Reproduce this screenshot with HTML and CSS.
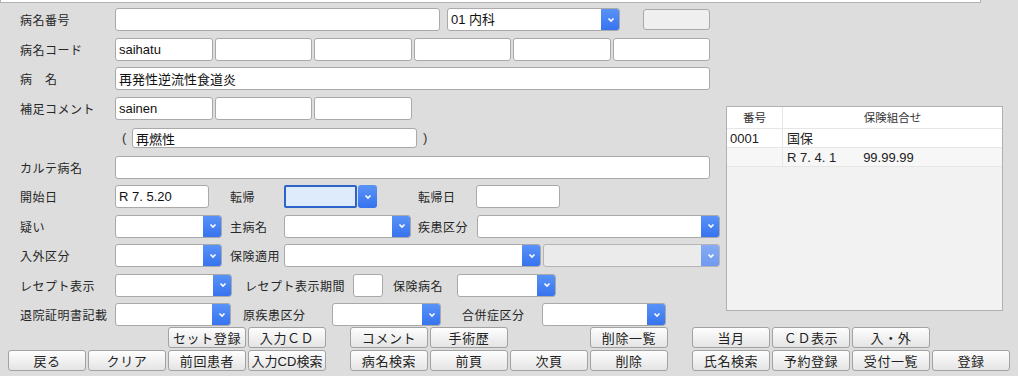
FILE: index.html
```html
<!DOCTYPE html>
<html lang="ja">
<head>
  <meta charset="UTF-8">
  <title>病名登録</title>
  <link rel="stylesheet" href="styles.css">
</head>
<body>

<div class="topbar"></div>

<div class="main">
  <div class="form">
    <div class="row">
      <span class="lbl">病名番号</span>
      <input class="inp w325" type="text" value="">
      <div class="sel w173 ml7"><span class="val">01 内科</span><span class="btn"><svg viewBox="0 0 8 6"><path d="M1.5 1.5 L4 4 L6.5 1.5"/></svg></span></div>
      <div class="graybox"></div>
    </div>

    <div class="row">
      <span class="lbl">病名コード</span>
      <div class="multi">
        <input class="inp" type="text" value="saihatu">
        <input class="inp" type="text" value="">
        <input class="inp" type="text" value="">
        <input class="inp" type="text" value="">
        <input class="inp" type="text" value="">
        <input class="inp" type="text" value="">
      </div>
    </div>

    <div class="row">
      <span class="lbl">病　名</span>
      <input class="inp w595" type="text" value="再発性逆流性食道炎">
    </div>

    <div class="row">
      <span class="lbl">補足コメント</span>
      <div class="multi short">
        <input class="inp" type="text" value="sainen">
        <input class="inp" type="text" value="">
        <input class="inp" type="text" value="">
      </div>
    </div>

    <div class="row row-paren">
      <span class="lbl"></span>
      <span class="paren">(</span>
      <input class="inp w285 thin" type="text" value="再燃性">
      <span class="paren-r">)</span>
    </div>

    <div class="row">
      <span class="lbl">カルテ病名</span>
      <input class="inp w595" type="text" value="">
    </div>

    <div class="row">
      <span class="lbl">開始日</span>
      <input class="inp w94" type="text" value="R 7. 5.20">
      <span class="lbl2 ml21 w54">転帰</span>
      <div class="sel w93 focus"><span class="val"></span><span class="btn"><svg viewBox="0 0 8 6"><path d="M1.5 1.5 L4 4 L6.5 1.5"/></svg></span></div>
      <span class="lbl2 ml41 w58">転帰日</span>
      <input class="inp w84" type="text" value="">
    </div>

    <div class="row">
      <span class="lbl">疑い</span>
      <div class="sel w107"><span class="val"></span><span class="btn"><svg viewBox="0 0 8 6"><path d="M1.5 1.5 L4 4 L6.5 1.5"/></svg></span></div>
      <span class="lbl2 ml8 w54">主病名</span>
      <div class="sel w127"><span class="val"></span><span class="btn"><svg viewBox="0 0 8 6"><path d="M1.5 1.5 L4 4 L6.5 1.5"/></svg></span></div>
      <span class="lbl2 ml7 w59">疾患区分</span>
      <div class="sel w243"><span class="val"></span><span class="btn"><svg viewBox="0 0 8 6"><path d="M1.5 1.5 L4 4 L6.5 1.5"/></svg></span></div>
    </div>

    <div class="row">
      <span class="lbl">入外区分</span>
      <div class="sel w107"><span class="val"></span><span class="btn"><svg viewBox="0 0 8 6"><path d="M1.5 1.5 L4 4 L6.5 1.5"/></svg></span></div>
      <span class="lbl2 ml8 w54">保険適用</span>
      <div class="sel w257"><span class="val"></span><span class="btn"><svg viewBox="0 0 8 6"><path d="M1.5 1.5 L4 4 L6.5 1.5"/></svg></span></div>
      <div class="sel w177 ml2 disabled"><span class="val"></span><span class="btn"><svg viewBox="0 0 8 6"><path d="M1.5 1.5 L4 4 L6.5 1.5"/></svg></span></div>
    </div>

    <div class="row">
      <span class="lbl">レセプト表示</span>
      <div class="sel w117"><span class="val"></span><span class="btn"><svg viewBox="0 0 8 6"><path d="M1.5 1.5 L4 4 L6.5 1.5"/></svg></span></div>
      <span class="lbl2 ml13 w108">レセプト表示期間</span>
      <input class="inp w30" type="text" value="">
      <span class="lbl2 ml10 w64">保険病名</span>
      <div class="sel w99"><span class="val"></span><span class="btn"><svg viewBox="0 0 8 6"><path d="M1.5 1.5 L4 4 L6.5 1.5"/></svg></span></div>
    </div>

    <div class="row">
      <span class="lbl">退院証明書記載</span>
      <div class="sel w116"><span class="val"></span><span class="btn"><svg viewBox="0 0 8 6"><path d="M1.5 1.5 L4 4 L6.5 1.5"/></svg></span></div>
      <span class="lbl2 ml12 w89">原疾患区分</span>
      <div class="sel w109"><span class="val"></span><span class="btn"><svg viewBox="0 0 8 6"><path d="M1.5 1.5 L4 4 L6.5 1.5"/></svg></span></div>
      <span class="lbl2 ml21 w80">合併症区分</span>
      <div class="sel w124"><span class="val"></span><span class="btn"><svg viewBox="0 0 8 6"><path d="M1.5 1.5 L4 4 L6.5 1.5"/></svg></span></div>
    </div>
  </div>

  <div class="side">
    <div class="hoken">
      <div class="hk-row hk-head">
        <span class="hk-no">番号</span>
        <span class="hk-name">保険組合せ</span>
      </div>
      <div class="hk-row">
        <span class="hk-no">0001</span>
        <span class="hk-name">国保</span>
      </div>
      <div class="hk-row hk-sub">
        <span class="hk-no"></span>
        <span class="hk-name">R 7. 4. 1<span class="hk-date">99.99.99</span></span>
      </div>
    </div>
  </div>
</div>

<div class="buttons">
  <span></span>
  <span></span>
  <button class="b">セット登録</button>
  <button class="b">入力ＣＤ</button>
  <span></span>
  <button class="b">コメント</button>
  <button class="b">手術歴</button>
  <span></span>
  <button class="b">削除一覧</button>
  <span></span>
  <button class="b">当月</button>
  <button class="b">ＣＤ表示</button>
  <button class="b">入・外</button>
  <span></span>

  <button class="b">戻る</button>
  <button class="b">クリア</button>
  <button class="b">前回患者</button>
  <button class="b tight">入力CD検索</button>
  <span></span>
  <button class="b">病名検索</button>
  <button class="b">前頁</button>
  <button class="b">次頁</button>
  <button class="b">削除</button>
  <span></span>
  <button class="b">氏名検索</button>
  <button class="b">予約登録</button>
  <button class="b">受付一覧</button>
  <button class="b">登録</button>
</div>

</body>
</html>
```

FILE: styles.css
```css
* {
  box-sizing: border-box;
}
body {
  margin: 0;
  background-color: #dddddd;
  font-family: "Liberation Sans", "Noto Sans CJK JP", sans-serif;
  color: #222;
  width: 1018px;
  height: 376px;
  overflow: hidden;
}
.topbar {
  width: 981px;
  height: 3px;
  background-color: #fff;
  border: 1px solid #b2b2b2;
  border-top: none;
}
.main {
  display: grid;
  grid-template-columns: 720px 277px;
  column-gap: 6px;
}
.form {
  padding-top: 5px;
}
.row {
  display: flex;
  align-items: flex-start;
  height: 29.5px;
}
.row:last-child {
  height: 24px;
}
.row-paren {
  padding-top: 2px;
}
.lbl {
  width: 115px;
  padding-left: 20px;
  flex: none;
  height: 23px;
  line-height: 23px;
  font-size: 12px;
  letter-spacing: 0.5px;
  color: #262626;
  font-family: "Noto Sans CJK JP", sans-serif;
}
.lbl2 {
  flex: none;
  height: 23px;
  line-height: 23px;
  font-size: 12px;
  letter-spacing: 0.5px;
  color: #262626;
  font-family: "Noto Sans CJK JP", sans-serif;
  white-space: nowrap;
}
.inp {
  flex: none;
  height: 23px;
  border: 1px solid #a9a9a9;
  border-radius: 3px;
  background-color: #fff;
  padding: 0 3px;
  font-family: "Liberation Sans", "Noto Sans CJK JP", sans-serif;
  font-size: 13px;
  color: #111;
  outline: none;
}
.inp.thin {
  height: 20px;
}
.multi {
  display: flex;
  gap: 2px;
  width: 595px;
}
.multi .inp {
  width: 97.5px;
}
.multi.short {
  width: 296.5px;
}
.paren {
  width: 17px;
  padding-left: 7px;
  font-size: 13px;
  line-height: 20px;
  color: #333;
}
.paren-r {
  margin-left: 6px;
  font-size: 13px;
  line-height: 20px;
  color: #333;
}
.graybox {
  width: 67px;
  height: 21px;
  margin-left: 23px;
  margin-top: 1px;
  border: 1px solid #a9a9a9;
  border-radius: 3px;
  background-color: #efefef;
}

/* select box */
.sel {
  flex: none;
  display: flex;
  height: 23px;
  border: 1px solid #a9a9a9;
  border-radius: 3px;
  background-color: #fff;
  overflow: hidden;
}
.sel .val {
  flex: 1;
  padding-left: 3px;
  line-height: 21px;
  font-size: 13px;
  color: #111;
}
.sel .btn {
  width: 19px;
  margin: -1px -1px -1px 0;
  background: linear-gradient(#5a94f8, #3572ee);
  border-radius: 0 3px 3px 0;
  display: flex;
  align-items: center;
  justify-content: center;
}
.sel .btn svg {
  width: 8px;
  height: 6px;
}
.sel .btn path {
  fill: none;
  stroke: #fff;
  stroke-width: 1.6;
}
.sel.focus {
  border: none;
  background: transparent;
  overflow: visible;
}
.sel.focus .val {
  background-color: #ddebfb;
  border: 2px solid #2e63c9;
  border-radius: 2px;
  margin-right: 1px;
}
.sel.focus .btn {
  margin: 0;
  border-radius: 3px;
}
.sel.disabled {
  background-color: #ebebeb;
  border-color: #b5b5b5;
}
.sel.disabled .btn {
  background: linear-gradient(#87acf3, #6f99ef);
}

/* widths / spacing */
.w30 { width: 30px; }
.w54 { width: 54px; }
.w58 { width: 58px; }
.w59 { width: 59px; }
.w64 { width: 64px; }
.w80 { width: 80px; }
.w84 { width: 84px; }
.w89 { width: 89px; }
.w93 { width: 93px; }
.w94 { width: 94px; }
.w99 { width: 99px; }
.w107 { width: 107px; }
.w108 { width: 108px; }
.w109 { width: 109px; }
.w116 { width: 116px; }
.w117 { width: 117px; }
.w124 { width: 124px; }
.w127 { width: 127px; }
.w173 { width: 173px; }
.w177 { width: 177px; }
.w243 { width: 243px; }
.w257 { width: 257px; }
.w285 { width: 285px; }
.w325 { width: 325px; }
.w595 { width: 595px; }
.ml2 { margin-left: 2px; }
.ml7 { margin-left: 7px; }
.ml8 { margin-left: 8px; }
.ml10 { margin-left: 10px; }
.ml12 { margin-left: 12px; }
.ml13 { margin-left: 13px; }
.ml21 { margin-left: 21px; }
.ml41 { margin-left: 41px; }

/* insurance table */
.side {
  padding-top: 103px;
}
.hoken {
  height: 205px;
  background-color: #f2f2f2;
  border: 1px solid #b0b0b0;
}
.hk-row {
  display: flex;
  height: 19px;
  line-height: 19px;
  font-size: 13px;
  border-bottom: 1px solid #e6e6e6;
}
.hk-row.hk-head {
  height: 22px;
  line-height: 21px;
  background-color: #fff;
  font-size: 11.5px;
  color: #333;
  font-family: "Noto Sans CJK JP", sans-serif;
}
.hk-row:nth-child(2) {
  background-color: #fff;
}
.hk-sub {
  background-color: #f7f7f7;
}
.hk-no {
  width: 56px;
  padding-left: 3px;
  border-right: 1px solid #e6e6e6;
}
.hk-name {
  flex: 1;
  padding-left: 4px;
}
.hk-head .hk-no,
.hk-head .hk-name {
  text-align: center;
  padding-left: 0;
}
.hk-date {
  margin-left: 27px;
}

/* bottom buttons */
.buttons {
  display: grid;
  grid-template-columns: repeat(4, 78px) 20px repeat(4, 78px) 20px repeat(4, 78px);
  column-gap: 2px;
  row-gap: 2px;
  padding-left: 8px;
}
.b {
  height: 21px;
  padding: 0;
  background: linear-gradient(#fefefe, #e4e4e4);
  border: 1px solid #a2a2a2;
  border-radius: 3px;
  font-family: "Liberation Sans", "Noto Sans CJK JP", sans-serif;
  font-size: 13px;
  letter-spacing: 0.6px;
  color: #222;
  cursor: pointer;
}
.b.tight {
  letter-spacing: 0;
}
```
